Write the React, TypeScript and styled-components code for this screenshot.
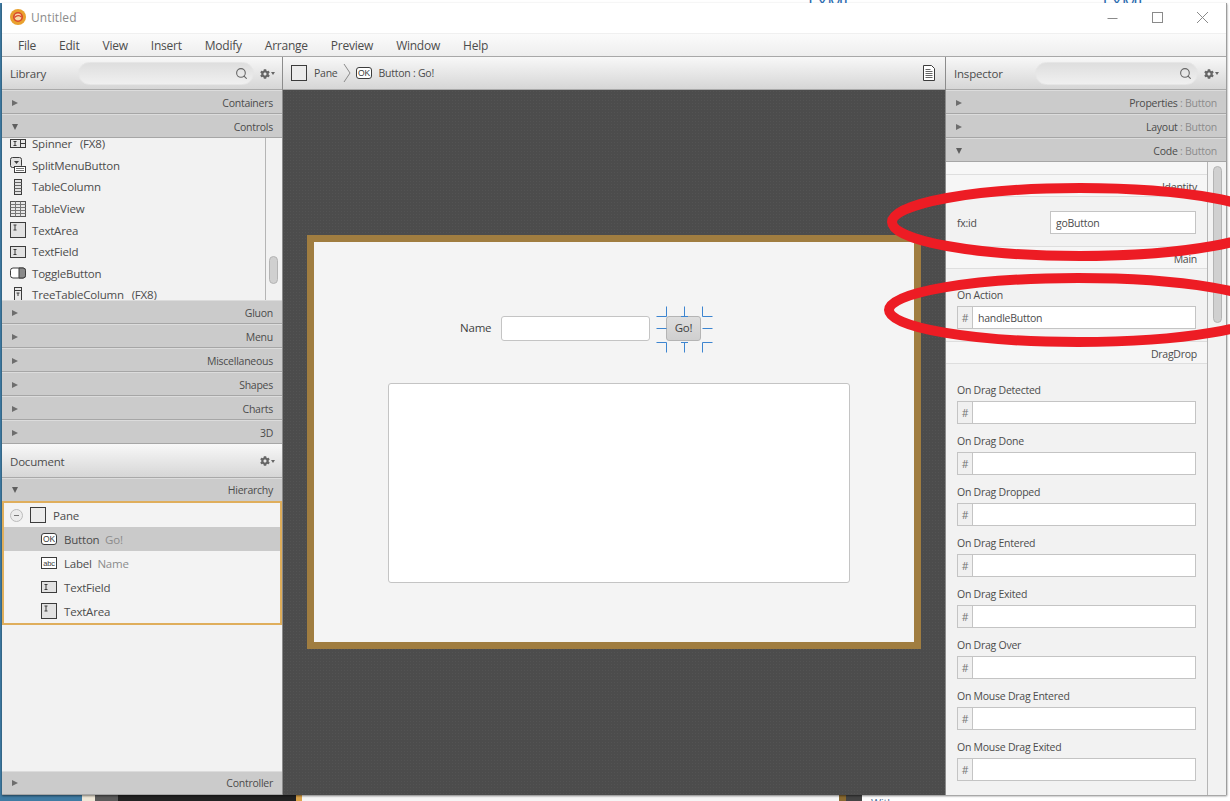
import styled, { createGlobalStyle } from "styled-components";
import { FaCog } from "react-icons/fa";
import { FiSearch } from "react-icons/fi";

const GlobalStyle = createGlobalStyle`
  html, body {
    margin: 0;
    padding: 0;
    background: #fff;
  }
  body {
    font-family: "Open Sans", "Liberation Sans", sans-serif;
    font-size: 11.5px;
    letter-spacing: -0.2px;
    color: #4c4c4c;
  }
`;

const Desktop = styled.div`
  position: relative;
  width: 1230px;
  height: 801px;
  overflow: hidden;
  background: linear-gradient(
    to right,
    #3f7ba3 0 82px,
    #efe8d8 82px 95px,
    #5a5a5a 95px 118px,
    #222 118px 296px,
    #d9a24a 296px 302px,
    #f6f6f6 302px 839px,
    #8a6a30 839px 846px,
    #444 846px 862px,
    #fff 862px
  );
`;

const TopStrip = styled.div`
  display: flex;
  height: 3px;
  overflow: hidden;
  background: #fff;
  padding-left: 808px;
  gap: 250px;
  font-size: 18px;
  line-height: 6px;
  color: #2c6cb0;
`;

const BehindText = styled.span`
  position: absolute;
  left: 871px;
  top: 795px;
  font-size: 11px;
  color: #4a6a94;
`;

const Window = styled.div`
  display: flex;
  flex-direction: column;
  box-sizing: border-box;
  width: 1225px;
  height: 792px;
  margin-left: 2px;
  background: #f2f2f2;
  border-right: 1px solid #9d9d9d;
  box-shadow: 0 1px 2px rgba(0, 0, 0, 0.5);
`;

const TitleBar = styled.div`
  display: flex;
  align-items: center;
  box-sizing: border-box;
  height: 30px;
  flex: none;
  padding: 0 0 2px 8px;
  background: #fff;
  font-size: 12px;
  letter-spacing: 0.1px;
  color: #8b8b8b;
`;

const AppTitle = styled.span`
  margin-left: 5px;
  flex: 1;
`;

const WindowControls = styled.svg`
  width: 110px;
  height: 16px;
  margin-right: 9px;
`;

const MenuBar = styled.div`
  display: flex;
  align-items: center;
  height: 24px;
  flex: none;
  box-sizing: border-box;
  padding-left: 16px;
  gap: 23.1px;
  background: linear-gradient(#fbfbfb, #eeeeee);
  border-bottom: 1px solid #a8a8a8;
  border-top: 1px solid #f0f0f0;
  font-size: 12px;
  letter-spacing: -0.25px;
`;

const MenuItem = styled.span``;

const Main = styled.div`
  display: flex;
  flex: 1;
  min-height: 0;
`;

const SidePanel = styled.div`
  display: flex;
  flex-direction: column;
  flex: none;
  width: 280px;
  background: #f2f2f2;
`;

const PanelHeader = styled.div<{ $height?: number }>`
  display: flex;
  align-items: center;
  flex: none;
  box-sizing: border-box;
  height: ${(p) => p.$height ?? 33}px;
  padding: 1px 7px 0 8px;
  background: linear-gradient(#f8f8f8, #d6d6d6);
  border-bottom: 1px solid #a9a9a9;
`;

const PanelTitle = styled.span`
  flex: 1;
`;

const SearchPill = styled.div<{ $width: number }>`
  display: flex;
  align-items: center;
  justify-content: flex-end;
  box-sizing: border-box;
  width: ${(p) => p.$width}px;
  height: 23px;
  margin-right: 6px;
  padding-right: 5px;
  border: 1px solid #e6e6e6;
  border-radius: 12px;
  background: linear-gradient(#dedede, #f0f0f0);
  color: #666;
  font-size: 13px;
`;

const GearWrap = styled.div`
  display: flex;
  align-items: center;
  gap: 1px;
  color: #666;
  font-size: 10px;
`;

const GearCaret = styled.span`
  width: 0;
  height: 0;
  border-left: 2.5px solid transparent;
  border-right: 2.5px solid transparent;
  border-top: 3px solid #666;
`;

const SectionBar = styled.div<{ $raised?: boolean }>`
  display: flex;
  align-items: center;
  justify-content: space-between;
  flex: none;
  box-sizing: border-box;
  height: 24px;
  padding: ${(p) => (p.$raised ? "0" : "1px")} 9px 0 10px;
  background: #cbcbcb;
  border-top: 1px solid #dcdcdc;
  border-bottom: 1px solid #a6a6a6;
  font-size: 10.5px;
  letter-spacing: -0.25px;
`;

const Arrow = styled.span<{ $open?: boolean }>`
  width: 0;
  height: 0;
  ${(p) =>
    p.$open
      ? `border-left: 3.5px solid transparent;
         border-right: 3.5px solid transparent;
         border-top: 6px solid #5f5f5f;`
      : `border-top: 3.5px solid transparent;
         border-bottom: 3.5px solid transparent;
         border-left: 6px solid #6e6e6e;`}
`;

const Muted = styled.span`
  color: #8c8c8c;
`;

const LibraryBody = styled.div`
  position: relative;
  display: flex;
  flex: none;
  height: 162px;
  overflow: hidden;
`;

const LibraryList = styled.div`
  flex: 1;
  margin-top: -5px;
  border-right: 1px solid #b5b5b5;
`;

const LibraryRow = styled.div`
  display: flex;
  align-items: center;
  height: 21.6px;
  padding-left: 8px;
  gap: 6px;
`;

const IconBox = styled.svg`
  flex: none;
  width: 16px;
  height: 16px;
`;

const FxTag = styled.span`
  margin-left: 5px;
`;

const ScrollTrack = styled.div<{ $top: number; $height: number; $width: number; $left: number }>`
  flex: none;
  box-sizing: border-box;
  width: ${(p) => p.$width}px;
  padding: ${(p) => p.$top}px 4px 0 ${(p) => p.$left}px;

  &::before {
    content: "";
    display: block;
    height: ${(p) => p.$height}px;
    border: 1px solid #b4b4b4;
    border-radius: 5px;
    background: #d0d0d0;
  }
`;

const TreeBox = styled.div`
  flex: none;
  margin-top: -1px;
  border: 2px solid #dfae5c;
  height: 120px;
  background: #f3f3f3;
  box-sizing: content-box;
`;

const TreeRow = styled.div<{ $selected?: boolean; $indent: number }>`
  display: flex;
  align-items: center;
  height: 24px;
  padding-left: ${(p) => p.$indent}px;
  gap: 7px;
  background: ${(p) => (p.$selected ? "#cacaca" : "transparent")};
`;

const Collapse = styled.span`
  display: flex;
  align-items: center;
  justify-content: center;
  box-sizing: border-box;
  width: 13px;
  height: 13px;
  border: 1px solid #bcbcbc;
  border-radius: 50%;
  background: #ececec;

  &::before {
    content: "";
    width: 5px;
    height: 1px;
    background: #777;
  }
`;

const Spacer = styled.div`
  flex: 1;
`;

const Center = styled.div`
  display: flex;
  flex-direction: column;
  flex: none;
  width: 664px;
  border-left: 1px solid #8c8c8c;
  border-right: 1px solid #8c8c8c;
  box-sizing: border-box;
`;

const Breadcrumb = styled(PanelHeader)`
  padding: 0 8px 0 8px;
  font-size: 10.5px;
  letter-spacing: -0.25px;
  gap: 7px;
`;

const Chevron = styled.svg`
  flex: none;
  width: 8px;
  height: 20px;
  margin: 0 -2px 0 -2px;
`;

const Canvas = styled.div`
  flex: 1;
  box-sizing: border-box;
  padding: 145px 0 0 24px;
  background-color: #4c4c4c;
  background-image: radial-gradient(#535353 0.8px, transparent 0.9px);
  background-size: 3px 3px;
`;

const ScenePane = styled.div`
  box-sizing: border-box;
  width: 614px;
  height: 414px;
  border: 7px solid #a07d40;
  background: #f4f4f4;
  padding-top: 74px;
`;

const FormRow = styled.div`
  display: flex;
  align-items: center;
  height: 25px;
  padding-left: 146px;
`;

const NameLabel = styled.span`
  width: 41px;
  margin-top: -2px;
  color: #3f3f3f;
`;

const SceneField = styled.div`
  width: 149px;
  height: 25px;
  box-sizing: border-box;
  border: 1px solid #c4c4c4;
  border-radius: 3px;
  background: #fff;
`;

const GoButton = styled.div`
  position: relative;
  display: flex;
  align-items: center;
  justify-content: center;
  box-sizing: border-box;
  width: 35px;
  height: 25px;
  margin-left: 16px;
  padding-bottom: 2px;
  border: 1px solid #b4b4b4;
  border-radius: 3px;
  background: linear-gradient(#dedede, #cfcfcf);
  color: #3f3f3f;
`;

const Handles = styled.svg`
  position: absolute;
  left: -11px;
  top: -11px;
  width: 57px;
  height: 47px;
`;

const SceneArea = styled.div`
  box-sizing: border-box;
  width: 462px;
  height: 200px;
  margin: 42px 0 0 74px;
  border: 1px solid #c4c4c4;
  border-radius: 3px;
  background: #fff;
`;

const InspectorBody = styled.div`
  display: flex;
  flex: 1;
  min-height: 0;
  overflow: hidden;
  font-size: 10.5px;
  letter-spacing: -0.25px;
`;

const InspectorList = styled.div`
  flex: 1;
  border-right: 1px solid #b5b5b5;
`;

const TopBand = styled.div`
  height: 12px;
  background: #f7f7f7;
`;

const SubHeader = styled.div`
  display: flex;
  align-items: center;
  justify-content: flex-end;
  box-sizing: border-box;
  padding: 2px 10px 0 0;
  background: #f6f6f6;
  border-top: 1px solid #dedede;
  border-bottom: 1px solid #dedede;
  height: 23px;
`;

const IdRow = styled.div`
  display: flex;
  align-items: center;
  box-sizing: border-box;
  height: 49px;
  padding: 2px 11px 0 11px;
  justify-content: space-between;
`;

const PlainInput = styled.div`
  display: flex;
  align-items: center;
  box-sizing: border-box;
  width: 146px;
  height: 23px;
  padding-left: 5px;
  border: 1px solid #c4c4c4;
  background: #fff;
`;

const HandlerGroup = styled.div<{ $height: number }>`
  box-sizing: border-box;
  height: ${(p) => p.$height}px;
  padding: 18px 11px 0 11px;
`;

const HandlerLabel = styled.div`
  height: 16px;
  line-height: 16px;
  margin-bottom: 3px;
`;

const HandlerField = styled.div`
  display: flex;
  height: 23px;
  box-sizing: border-box;
  border: 1px solid #c4c4c4;
  background: #fff;
`;

const HashCell = styled.span`
  display: flex;
  align-items: center;
  justify-content: center;
  width: 14px;
  flex: none;
  background: #f0f0f0;
  border-right: 1px solid #c4c4c4;
  color: #777;
`;

const HandlerValue = styled.span`
  display: flex;
  align-items: center;
  padding-left: 5px;
`;

const Annotation = styled.svg`
  position: absolute;
  left: 0;
  top: 0;
  width: 1230px;
  height: 801px;
  pointer-events: none;
`;

const stroke = "#3c3c3c";

function PaneIcon() {
  return (
    <IconBox viewBox="0 0 16 16">
      <rect x="0.5" y="0.5" width="15" height="15" fill="#ececec" stroke={stroke} />
    </IconBox>
  );
}

function OkIcon() {
  return (
    <IconBox viewBox="0 0 16 16">
      <rect x="0.5" y="2.5" width="15" height="11" rx="2.5" fill="#fff" stroke={stroke} />
      <text x="8" y="11" textAnchor="middle" fontSize="8.5" fontFamily="Liberation Sans" fill={stroke}>
        OK
      </text>
    </IconBox>
  );
}

function AbcIcon() {
  return (
    <IconBox viewBox="0 0 16 16">
      <rect x="0.5" y="2.5" width="15" height="11" fill="#fff" stroke={stroke} />
      <text x="8" y="10.8" textAnchor="middle" fontSize="7.5" fontFamily="Liberation Sans" fill={stroke}>
        abc
      </text>
    </IconBox>
  );
}

function FieldIcon() {
  return (
    <IconBox viewBox="0 0 16 16">
      <rect x="0.5" y="2.5" width="15" height="11" fill="#e2e2e2" stroke={stroke} />
      <path d="M3.5 5.5h3M5 5.5v5M3.5 10.5h3" stroke={stroke} fill="none" />
    </IconBox>
  );
}

function AreaIcon() {
  return (
    <IconBox viewBox="0 0 16 16">
      <rect x="0.5" y="0.5" width="15" height="15" fill="#e2e2e2" stroke={stroke} />
      <path d="M3.5 3h3M5 3v5M3.5 8h3" stroke={stroke} fill="none" />
    </IconBox>
  );
}

function SpinnerIcon() {
  return (
    <IconBox viewBox="0 0 16 16">
      <rect x="0.5" y="3.5" width="15" height="8" fill="#e8e8e8" stroke={stroke} />
      <path d="M3.5 5.5h3M5 5.5v4M3.5 9.5h3M10.5 3.5v8M10.5 7.5h5" stroke={stroke} fill="none" />
    </IconBox>
  );
}

function SplitMenuIcon() {
  return (
    <IconBox viewBox="0 0 16 16">
      <rect x="0.5" y="0.5" width="11" height="10" rx="2" fill="#e2e2e2" stroke={stroke} />
      <path d="M4 4h5l-2.5 3z" fill={stroke} />
      <rect x="4.5" y="9.5" width="11" height="6" fill="#fff" stroke={stroke} />
      <path d="M6 11.5h8M6 13.5h8" stroke="#777" />
    </IconBox>
  );
}

function TableColumnIcon() {
  return (
    <IconBox viewBox="0 0 16 16">
      <rect x="4.5" y="0.5" width="7" height="15" fill="#e2e2e2" stroke={stroke} />
      <path d="M4.5 3.5h7M4.5 6.5h7M4.5 9.5h7M4.5 12.5h7" stroke="#666" />
    </IconBox>
  );
}

function TableViewIcon() {
  return (
    <IconBox viewBox="0 0 16 16">
      <rect x="0.5" y="0.5" width="15" height="15" fill="#e8e8e8" stroke="#555" />
      <path d="M0.5 3.5h15M0.5 6.5h15M0.5 9.5h15M0.5 12.5h15M5.5 0.5v15M10.5 0.5v15" stroke="#777" />
    </IconBox>
  );
}

function ToggleIcon() {
  return (
    <IconBox viewBox="0 0 16 16">
      <rect x="0.5" y="3" width="15" height="10" rx="2.5" fill="#fff" stroke={stroke} />
      <path d="M9 3h4a2.5 2.5 0 0 1 2.5 2.5v5A2.5 2.5 0 0 1 13 13H9z" fill="#8a8a8a" stroke={stroke} />
    </IconBox>
  );
}

function TreeColumnIcon() {
  return (
    <IconBox viewBox="0 0 16 16">
      <rect x="4.5" y="0.5" width="7" height="15" fill="#e8e8e8" stroke={stroke} />
      <path d="M4.5 3.5h7M6.5 6h3M8 6v3" stroke={stroke} fill="none" />
    </IconBox>
  );
}

function Gear() {
  return (
    <GearWrap>
      <FaCog />
      <GearCaret />
    </GearWrap>
  );
}

function AppLogo() {
  return (
    <IconBox viewBox="0 0 16 16">
      <circle cx="8" cy="8" r="8" fill="#e9a12f" />
      <circle cx="8" cy="8" r="4.2" fill="#f6d9a6" stroke="#d9472b" strokeWidth="1.6" />
      <path d="M4.5 8.5c2-2 5-2 7-.5" stroke="#d9472b" strokeWidth="1.2" fill="none" />
    </IconBox>
  );
}

const libraryItems = [
  { icon: <SpinnerIcon />, name: "Spinner", fx: true },
  { icon: <SplitMenuIcon />, name: "SplitMenuButton" },
  { icon: <TableColumnIcon />, name: "TableColumn" },
  { icon: <TableViewIcon />, name: "TableView" },
  { icon: <AreaIcon />, name: "TextArea" },
  { icon: <FieldIcon />, name: "TextField" },
  { icon: <ToggleIcon />, name: "ToggleButton" },
  { icon: <TreeColumnIcon />, name: "TreeTableColumn", fx: true },
];

const menus = ["File", "Edit", "View", "Insert", "Modify", "Arrange", "Preview", "Window", "Help"];
const dragEvents = [
  "On Drag Detected",
  "On Drag Done",
  "On Drag Dropped",
  "On Drag Entered",
  "On Drag Exited",
  "On Drag Over",
  "On Mouse Drag Entered",
  "On Mouse Drag Exited",
];

function Section({
  title,
  detail,
  open,
  raised,
}: {
  title: string;
  detail?: string;
  open?: boolean;
  raised?: boolean;
}) {
  return (
    <SectionBar $raised={raised}>
      <Arrow $open={open} />
      <span>
        {title}
        {detail && <Muted> : {detail}</Muted>}
      </span>
    </SectionBar>
  );
}

export default function App() {
  return (
    <Desktop>
      <GlobalStyle />
      <TopStrip>
        <span>FXML</span>
        <span>FXML</span>
      </TopStrip>
      <BehindText>With</BehindText>
      <Window>
        <TitleBar>
          <AppLogo />
          <AppTitle>Untitled</AppTitle>
          <WindowControls viewBox="0 0 110 16">
            <path d="M0.5 9.5h10" stroke="#8a8a8a" />
            <rect x="45.5" y="3.5" width="10" height="10" fill="none" stroke="#8a8a8a" />
            <path d="M90 3l11 11M101 3L90 14" stroke="#8a8a8a" />
          </WindowControls>
        </TitleBar>
        <MenuBar>
          {menus.map((m) => (
            <MenuItem key={m}>{m}</MenuItem>
          ))}
        </MenuBar>
        <Main>
          <SidePanel>
            <PanelHeader>
              <PanelTitle>Library</PanelTitle>
              <SearchPill $width={176}>
                <FiSearch />
              </SearchPill>
              <Gear />
            </PanelHeader>
            <Section title="Containers" />
            <Section title="Controls" open />
            <LibraryBody>
              <LibraryList>
                {libraryItems.map((item) => (
                  <LibraryRow key={item.name}>
                    {item.icon}
                    <span>
                      {item.name}
                      {item.fx && <FxTag> (FX8)</FxTag>}
                    </span>
                  </LibraryRow>
                ))}
              </LibraryList>
              <ScrollTrack $top={118} $height={26} $width={16} $left={3} />
            </LibraryBody>
            <Section title="Gluon" />
            <Section title="Menu" />
            <Section title="Miscellaneous" />
            <Section title="Shapes" />
            <Section title="Charts" />
            <Section title="3D" />
            <PanelHeader $height={34}>
              <PanelTitle>Document</PanelTitle>
              <Gear />
            </PanelHeader>
            <Section title="Hierarchy" open raised />
            <TreeBox>
              <TreeRow $indent={6}>
                <Collapse />
                <PaneIcon />
                <span>Pane</span>
              </TreeRow>
              <TreeRow $indent={37} $selected>
                <OkIcon />
                <span>
                  Button&nbsp; <Muted>Go!</Muted>
                </span>
              </TreeRow>
              <TreeRow $indent={37}>
                <AbcIcon />
                <span>
                  Label&nbsp; <Muted>Name</Muted>
                </span>
              </TreeRow>
              <TreeRow $indent={37}>
                <FieldIcon />
                <span>TextField</span>
              </TreeRow>
              <TreeRow $indent={37}>
                <AreaIcon />
                <span>TextArea</span>
              </TreeRow>
            </TreeBox>
            <Spacer />
            <Section title="Controller" raised />
          </SidePanel>
          <Center>
            <Breadcrumb>
              <PaneIcon />
              <span>Pane</span>
              <Chevron viewBox="0 0 8 20">
                <path d="M1 1l6 9-6 9" fill="none" stroke="#8a8a8a" />
              </Chevron>
              <OkIcon />
              <PanelTitle>Button : Go!</PanelTitle>
              <IconBox viewBox="0 0 16 16">
                <path d="M2.5 0.5h8l3 3v12h-11z" fill="#fff" stroke={stroke} />
                <path d="M4.5 4.5h5M4.5 6.5h7M4.5 8.5h7M4.5 10.5h7M4.5 12.5h7" stroke="#666" />
              </IconBox>
            </Breadcrumb>
            <Canvas>
              <ScenePane>
                <FormRow>
                  <NameLabel>Name</NameLabel>
                  <SceneField />
                  <GoButton>
                    Go!
                    <Handles viewBox="0 0 57 47">
                      <path
                        d="M0.5 10.5h10V0.5M28.5 0.5v10M25 10.5h7M46.5 0.5v10h10M0.5 22.5h10M46.5 22.5h10M0.5 36.5h10v10M28.5 36.5v10M25 36.5h7M56.5 36.5h-10v10"
                        fill="none"
                        stroke="#3d85d0"
                      />
                    </Handles>
                  </GoButton>
                </FormRow>
                <SceneArea />
              </ScenePane>
            </Canvas>
          </Center>
          <SidePanel>
            <PanelHeader>
              <PanelTitle>Inspector</PanelTitle>
              <SearchPill $width={163}>
                <FiSearch />
              </SearchPill>
              <Gear />
            </PanelHeader>
            <Section title="Properties" detail="Button" />
            <Section title="Layout" detail="Button" />
            <Section title="Code" detail="Button" open />
            <InspectorBody>
              <InspectorList>
                <TopBand />
                <SubHeader>Identity</SubHeader>
                <IdRow>
                  <span>fx:id</span>
                  <PlainInput>goButton</PlainInput>
                </IdRow>
                <SubHeader>Main</SubHeader>
                <HandlerGroup $height={72}>
                  <HandlerLabel>On Action</HandlerLabel>
                  <HandlerField>
                    <HashCell>#</HashCell>
                    <HandlerValue>handleButton</HandlerValue>
                  </HandlerField>
                </HandlerGroup>
                <SubHeader>DragDrop</SubHeader>
                {dragEvents.map((name) => (
                  <HandlerGroup key={name} $height={51}>
                    <HandlerLabel>{name}</HandlerLabel>
                    <HandlerField>
                      <HashCell>#</HashCell>
                    </HandlerField>
                  </HandlerGroup>
                ))}
              </InspectorList>
              <ScrollTrack $top={4} $height={155} $width={18} $left={5} />
            </InspectorBody>
          </SidePanel>
        </Main>
      </Window>
      <Annotation viewBox="0 0 1230 801">
        <ellipse cx="1080" cy="222" rx="188" ry="34" fill="none" stroke="#ed1c24" strokeWidth="10" />
        <ellipse cx="1078" cy="310" rx="189" ry="32" fill="none" stroke="#ed1c24" strokeWidth="10" />
      </Annotation>
    </Desktop>
  );
}
